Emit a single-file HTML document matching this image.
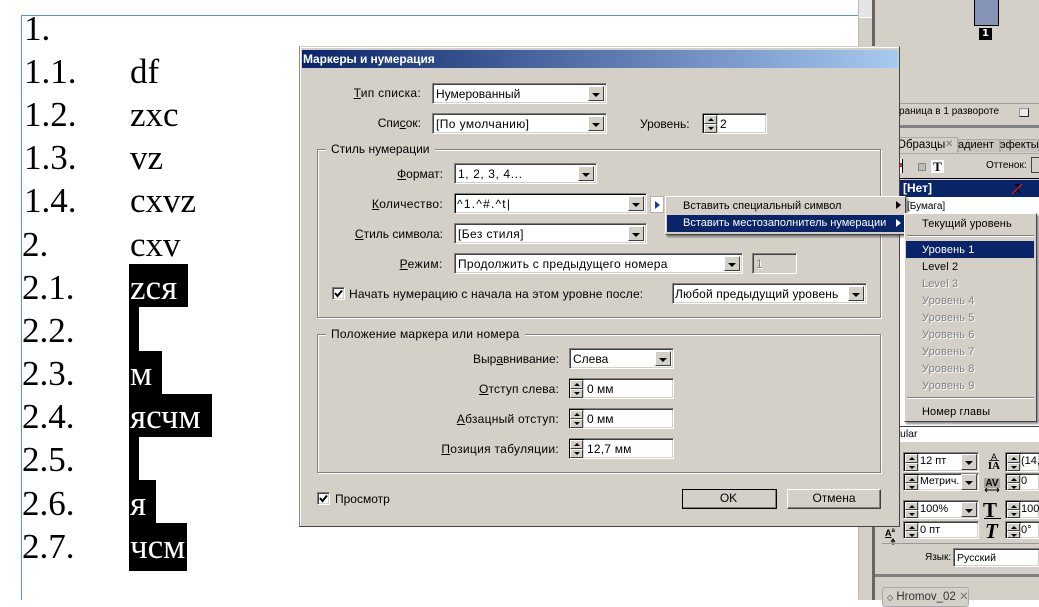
<!DOCTYPE html>
<html><head><meta charset="utf-8"><style>
html,body{margin:0;padding:0}
body{width:1039px;height:600px;position:relative;overflow:hidden;background:#fff;font:12px/14px "Liberation Sans",sans-serif;color:#000}
div,span.a{position:absolute;box-sizing:border-box}
.s{position:absolute;font:35px/40px "Liberation Serif",serif;white-space:nowrap}
.t{position:absolute;white-space:nowrap;line-height:14px}
.m{font-size:11px;letter-spacing:.1px}
.n{font-size:11px}
.r{position:absolute;white-space:nowrap;line-height:14px;text-align:right}
.k{background:#000}
.f{background:#fff;border:1px solid;border-color:#808080 #fff #fff #808080;box-shadow:inset 1px 1px 0 #404040,inset -1px -1px 0 #d4d0c8}
.f span{position:absolute;left:3px;top:3px;white-space:nowrap}
.b{position:absolute;right:2px;top:2px;bottom:2px;width:16px;background:#d4d0c8;border:1px solid;border-color:#fff #404040 #404040 #fff}
.b:after{content:"";position:absolute;left:3px;top:6px;border:4px solid transparent;border-top:4px solid #000;border-bottom:0}
.g{border:1px solid #808080;box-shadow:1px 1px 0 #fff,inset 1px 1px 0 #fff}
.gl{position:absolute;background:#d4d0c8;padding:0 5px;white-space:nowrap;line-height:14px}
.sp{position:absolute;width:15px;background:#d4d0c8;border-top:1px solid #000;border-left:1px solid #000;z-index:2}
.sp i{position:absolute;left:0;width:13px;height:50%;border:1px solid;border-color:#fff #404040 #404040 #fff;box-sizing:border-box}
.sp i:first-child{top:0}.sp i:last-child{bottom:0}
.sp i:after{content:"";position:absolute;left:3px;top:2px;border:3px solid transparent;border-bottom:3px solid #000;border-top:0}
.sp i:last-child:after{border-top:3px solid #000;border-bottom:0}
.cb{position:absolute;width:13px;height:13px;background:#fff;border:1px solid;border-color:#808080 #fff #fff #808080;box-shadow:inset 1px 1px 0 #404040,inset -1px -1px 0 #d4d0c8}
.btn{position:absolute;background:#d4d0c8;text-align:center;line-height:17px;border:1px solid;border-color:#fff #404040 #404040 #fff;box-shadow:inset -1px -1px 0 #808080}
.dis{color:#808080;text-shadow:1px 1px 0 #fff}
.tri{position:absolute;border:4px solid transparent;border-left:5px solid #000;border-right:0}
.p{background:#d4d0c8}
svg{position:absolute;overflow:visible}
</style></head><body>

<div style="left:21px;top:15px;width:838px;height:1px;background:#5b8fdc"></div>
<div style="left:21px;top:15px;width:1px;height:585px;background:#5b8fdc"></div>
<div style="left:858px;top:0;width:1px;height:600px;background:#bbb"></div>

<div class="k" style="left:129px;top:264px;width:59px;height:43px"></div>
<div class="k" style="left:129px;top:307px;width:10px;height:44px"></div>
<div class="k" style="left:129px;top:351px;width:33px;height:43px"></div>
<div class="k" style="left:129px;top:394px;width:83px;height:43px"></div>
<div class="k" style="left:129px;top:437px;width:10px;height:43px"></div>
<div class="k" style="left:129px;top:480px;width:27px;height:43px"></div>
<div class="k" style="left:129px;top:523px;width:58px;height:48px"></div>

<span class="s" style="left:24px;top:9px">1.</span>
<span class="s" style="left:24px;top:52px">1.1.</span><span class="s" style="left:130px;top:52px">df</span>
<span class="s" style="left:24px;top:95px">1.2.</span><span class="s" style="left:130px;top:95px">zxc</span>
<span class="s" style="left:24px;top:138px">1.3.</span><span class="s" style="left:130px;top:138px">vz</span>
<span class="s" style="left:24px;top:181px">1.4.</span><span class="s" style="left:130px;top:181px">cxvz</span>
<span class="s" style="left:22px;top:225px">2.</span><span class="s" style="left:130px;top:225px">cxv</span>
<span class="s" style="left:22px;top:268px">2.1.</span><span class="s" style="left:130px;top:268px;color:#fff">zcя</span>
<span class="s" style="left:22px;top:311px">2.2.</span>
<span class="s" style="left:22px;top:354px">2.3.</span><span class="s" style="left:130px;top:354px;color:#fff">м</span>
<span class="s" style="left:22px;top:397px">2.4.</span><span class="s" style="left:130px;top:397px;color:#fff">ясчм</span>
<span class="s" style="left:22px;top:440px">2.5.</span>
<span class="s" style="left:22px;top:484px">2.6.</span><span class="s" style="left:130px;top:484px;color:#fff">я</span>
<span class="s" style="left:22px;top:527px">2.7.</span><span class="s" style="left:130px;top:527px;color:#fff">чсм</span>

<!-- right side -->
<div class="p" style="left:859px;top:0;width:180px;height:600px"></div>
<div style="left:859px;top:0;width:13px;height:17px;background:#e4e4e4"></div>
<div style="left:859px;top:17px;width:13px;height:1px;background:#fff"></div>
<div style="left:872px;top:0;width:3px;height:600px;background:#666"></div>
<div style="left:974px;top:0;width:25px;height:26px;background:#8593b5;border:1px solid #000;border-top:0"></div>
<div style="left:979px;top:28px;width:13px;height:12px;background:#000;color:#fff;font:bold 10px/12px 'DejaVu Sans',sans-serif;text-align:center">1</div>
<div style="left:875px;top:103px;width:164px;height:1px;background:#a0a0a0"></div>
<span class="t" style="left:899px;top:105px;font-size:10px">раница в 1 развороте</span>
<div style="left:1019px;top:108px;width:10px;height:9px;background:#e8e8e8;border:1px solid #999;border-right-color:#222;border-bottom-color:#222"></div>
<div style="left:875px;top:125px;width:164px;height:3px;background:#808080"></div>
<div style="left:899px;top:137px;width:59px;height:16px;background:#d4d0c8;border:1px solid #aaa;border-bottom:0"></div>
<span class="t" style="left:897px;top:138px;font-size:11.5px">Образцы</span><span class="t" style="left:945px;top:138px;color:#777;font-size:10px">✕</span>
<div style="left:958px;top:139px;width:42px;height:13px;background:#c8c4bc;border:1px solid #aaa;border-bottom:0"></div>
<span class="t" style="left:958px;top:138px;font-size:11px">адиент</span>
<div style="left:1000px;top:139px;width:39px;height:13px;background:#c8c4bc;border:1px solid #aaa;border-bottom:0"></div>
<span class="t" style="left:1000px;top:138px;font-size:11px">эфекты</span>
<div style="left:875px;top:153px;width:164px;height:1px;background:#aaa"></div>
<div style="left:899px;top:159px;width:4px;height:14px;background:#fff;border-right:1px solid #000"></div>
<div style="left:899px;top:163px;width:3px;height:4px;background:#d22"></div>
<div style="left:918px;top:163px;width:8px;height:8px;background:#bbb;border:1px solid #888"></div>
<div style="left:931px;top:160px;width:13px;height:13px;background:#fff;font:bold 13px/14px 'Liberation Serif',serif;text-align:center">T</div>
<span class="t" style="left:986px;top:159px;font-size:10px">Оттенок:</span>
<div style="left:1031px;top:157px;width:8px;height:16px;border:1px solid #444;border-right:0"></div>
<div style="left:875px;top:178px;width:164px;height:1px;background:#000"></div>
<div style="left:899px;top:180px;width:140px;height:17px;background:#0a246a"></div>
<span class="t" style="left:903px;top:181px;color:#fff;font-weight:bold">[Нет]</span>
<svg style="left:1012px;top:184px" width="10" height="10" viewBox="0 0 10 10"><path d="M3 1 L7 1 L5 5 L8 9 M5 5 L2 9" stroke="#000" stroke-width="1.6" fill="none"/><path d="M0 10 L10 0" stroke="#e22" stroke-width="1.2"/></svg>
<div style="left:899px;top:197px;width:140px;height:229px;background:#fff"></div>
<span class="t" style="left:907px;top:200px;font-size:10px">[Бумага]</span>
<div style="left:875px;top:426px;width:164px;height:16px;background:#fff;border-top:1px solid #444"></div>
<span class="t" style="left:900px;top:427px;font-size:10.5px">ular</span>

<div class="f" style="left:903px;top:452px;width:76px;height:20px"></div>
<div class="sp" style="left:904px;top:453px;height:18px"><i></i><i></i></div>
<span class="t n" style="left:920px;top:454px">12 пт</span>
<div class="b" style="left:961px;top:454px;right:auto;width:16px;height:16px"></div>
<div class="f" style="left:903px;top:473px;width:76px;height:18px"></div>
<div class="sp" style="left:904px;top:474px;height:16px"><i></i><i></i></div>
<span class="t n" style="left:920px;top:474px;font-size:10.5px">Метрич.</span>
<div class="b" style="left:961px;top:474px;right:auto;width:16px;height:16px"></div>
<div class="f" style="left:1005px;top:452px;width:34px;height:20px;border-right:0"></div>
<div class="sp" style="left:1006px;top:453px;height:18px"><i></i><i></i></div>
<span class="t n" style="left:1021px;top:454px">(14,4</span>
<div class="f" style="left:1005px;top:473px;width:34px;height:18px;border-right:0"></div>
<div class="sp" style="left:1006px;top:474px;height:16px"><i></i><i></i></div>
<span class="t n" style="left:1021px;top:474px">0</span>
<svg style="left:987px;top:452px" width="14" height="19" viewBox="0 0 14 19"><text x="7" y="8" font-family="Liberation Sans" font-size="9" text-anchor="middle">A</text><text x="7" y="17" font-family="Liberation Serif" font-weight="bold" font-size="11" text-anchor="middle">IA</text><path d="M2 8.500 H12" stroke="#000" stroke-width=".8"/></svg>
<div style="left:984px;top:478px;width:16px;height:10px;background:#a8a4a0;font:bold 10px/11px 'Liberation Sans',sans-serif;text-align:center">AV</div>
<svg style="left:985px;top:488px" width="14" height="4" viewBox="0 0 14 4"><path d="M0 2 H14 M0 2 L2 0 M0 2 L2 4 M14 2 L12 0 M14 2 L12 4" stroke="#000" fill="none"/></svg>
<div class="f" style="left:903px;top:500px;width:76px;height:19px"></div>
<div class="sp" style="left:904px;top:501px;height:17px"><i></i><i></i></div>
<span class="t n" style="left:920px;top:502px">100%</span>
<div class="b" style="left:961px;top:502px;right:auto;width:16px;height:15px"></div>
<div class="f" style="left:903px;top:521px;width:76px;height:18px"></div>
<div class="sp" style="left:904px;top:522px;height:16px"><i></i><i></i></div>
<span class="t n" style="left:920px;top:523px">0 пт</span>
<span class="s" style="left:983px;top:498px;font:bold 21px/24px 'Liberation Serif',serif">T</span>
<div style="left:984px;top:518px;width:17px;height:1px;background:#000"></div>
<span class="s" style="left:985px;top:519px;font:italic bold 21px/24px 'Liberation Serif',serif">T</span>
<div class="f" style="left:1005px;top:500px;width:34px;height:19px;border-right:0"></div>
<div class="sp" style="left:1006px;top:501px;height:17px"><i></i><i></i></div>
<span class="t n" style="left:1021px;top:502px">100%</span>
<div class="f" style="left:1005px;top:521px;width:34px;height:18px;border-right:0"></div>
<div class="sp" style="left:1006px;top:522px;height:16px"><i></i><i></i></div>
<span class="t n" style="left:1021px;top:523px">0°</span>
<span class="t" style="left:885px;top:527px;font:bold 9px/12px 'Liberation Sans',sans-serif"><u>A</u><sup style="font-size:6px;line-height:0">a</sup></span>
<svg style="left:890px;top:539px" width="6" height="6" viewBox="0 0 6 6"><path d="M3 6 V1 M1 3 L3 0 L5 3" stroke="#000" fill="none"/></svg>
<div style="left:882px;top:543px;width:157px;height:1px;background:#999"></div>
<span class="t" style="left:925px;top:551px;font-size:10px">Язык:</span>
<div class="f" style="left:953px;top:548px;width:86px;height:19px;border-right:0"><span style="top:2px;font-size:10.5px">Русский</span></div>
<div style="left:875px;top:574px;width:164px;height:3px;background:#808080"></div>
<div style="left:882px;top:587px;width:87px;height:20px;border:1px solid #aaa;border-radius:3px;background:#d4d0c8"></div>
<span class="t" style="left:887px;top:590px;color:#333;font-size:11.5px"><span style="font-size:8px">◇</span> Hromov_02 <span style="color:#777">✕</span></span>

<!-- dialog -->
<div style="left:299px;top:46px;width:601px;height:481px;background:#d4d0c8;border:1px solid;border-color:#d4d0c8 #444 #444 #888;box-shadow:inset 1px 1px 0 #fff"></div>
<div style="left:302px;top:50px;width:596px;height:18px;background:linear-gradient(90deg,#0a246a,#a6caf0)"></div>
<span class="t" style="left:303px;top:52px;color:#fff;font-weight:bold;font-size:12px;letter-spacing:-.1px">Маркеры и нумерация</span>

<div class="r" style="right:618px;top:86px;letter-spacing:.3px"><u>Т</u>ип списка:</div>
<div class="f" style="left:432px;top:83px;width:175px;height:21px"><span>Нумерованный</span><div class="b"></div></div>
<div class="r" style="right:618px;top:116px">Спи<u>с</u>ок:</div>
<div class="f" style="left:432px;top:113px;width:175px;height:21px"><span style="letter-spacing:.4px">[По умолчанию]</span><div class="b"></div></div>
<span class="t" style="left:640px;top:117px">Уровень:</span>
<div class="f" style="left:702px;top:113px;width:65px;height:21px"><span style="left:17px">2</span></div>
<div class="sp" style="left:703px;top:114px;height:19px"><i></i><i></i></div>

<div class="g" style="left:317px;top:149px;width:564px;height:169px"></div>
<span class="gl" style="left:326px;top:142px">Стиль нумерации</span>
<div class="r" style="right:596px;top:167px"><u>Ф</u>ормат:</div>
<div class="f" style="left:454px;top:163px;width:143px;height:21px"><span style="letter-spacing:.6px">1, 2, 3, 4...</span><div class="b"></div></div>
<div class="r" style="right:596px;top:197px;letter-spacing:.3px"><u>К</u>оличество:</div>
<div class="f" style="left:454px;top:193px;width:193px;height:21px;box-shadow:inset 1px 1px 0 #000,inset -1px -1px 0 #d4d0c8"><span style="left:2px;letter-spacing:1.2px">^1.^#.^t|</span><div class="b"></div></div>
<div class="r" style="right:596px;top:227px"><u>С</u>тиль символа:</div>
<div class="f" style="left:454px;top:223px;width:193px;height:21px"><span style="letter-spacing:.4px">[Без стиля]</span><div class="b"></div></div>
<div class="r" style="right:596px;top:257px;letter-spacing:.5px"><u>Р</u>ежим:</div>
<div class="f" style="left:454px;top:253px;width:289px;height:21px"><span style="letter-spacing:.26px">Продолжить с предыдущего номера</span><div class="b"></div></div>
<div class="f" style="left:752px;top:253px;width:45px;height:21px;background:#d4d0c8"><span class="dis">1</span></div>
<div class="cb" style="left:332px;top:287px"></div>
<svg style="left:334px;top:289px" width="9" height="9" viewBox="0 0 9 9"><path d="M1 4 L3.500 7 L8 1.500" stroke="#000" stroke-width="2" fill="none"/></svg>
<span class="t" style="left:349px;top:287px;letter-spacing:.17px">Начать нумерацию с начала на этом уровне после:</span>
<div class="f" style="left:672px;top:283px;width:195px;height:21px"><span style="left:2px;letter-spacing:.13px">Любой предыдущий уровень</span><div class="b"></div></div>

<div class="g" style="left:317px;top:334px;width:564px;height:139px"></div>
<span class="gl" style="left:326px;top:327px;letter-spacing:.22px">Положение маркера или номера</span>
<div class="r" style="right:480px;top:352px">Выр<u>а</u>внивание:</div>
<div class="f" style="left:569px;top:348px;width:105px;height:21px"><span>Слева</span><div class="b"></div></div>
<div class="r" style="right:480px;top:382px;letter-spacing:.15px"><u>О</u>тступ слева:</div>
<div class="f" style="left:569px;top:378px;width:105px;height:21px"><span style="left:17px">0 мм</span></div>
<div class="sp" style="left:569px;top:379px;height:19px"><i></i><i></i></div>
<div class="r" style="right:480px;top:412px;letter-spacing:.25px"><u>А</u>бзацный отступ:</div>
<div class="f" style="left:569px;top:408px;width:105px;height:21px"><span style="left:17px">0 мм</span></div>
<div class="sp" style="left:569px;top:409px;height:19px"><i></i><i></i></div>
<div class="r" style="right:480px;top:442px;letter-spacing:.3px"><u>П</u>озиция табуляции:</div>
<div class="f" style="left:569px;top:438px;width:105px;height:21px"><span style="left:17px;letter-spacing:.2px">12,7 мм</span></div>
<div class="sp" style="left:569px;top:439px;height:19px"><i></i><i></i></div>

<div class="cb" style="left:317px;top:492px"></div>
<svg style="left:319px;top:494px" width="9" height="9" viewBox="0 0 9 9"><path d="M1 4 L3.500 7 L8 1.500" stroke="#000" stroke-width="2" fill="none"/></svg>
<span class="t" style="left:335px;top:492px">Просмотр</span>
<div class="btn" style="left:682px;top:489px;width:95px;height:20px;outline:1px solid #000;outline-offset:-1px;padding-right:2px">OK</div>
<div class="btn" style="left:787px;top:489px;width:94px;height:20px">Отмена</div>

<!-- flyout button -->
<div style="left:650px;top:196px;width:14px;height:17px;background:#fff;border:1px solid #b8b4ac"></div>
<div class="tri" style="left:655px;top:201px;border-left-color:#1a3a9a"></div>

<!-- menu 1 -->
<div style="left:665px;top:196px;width:241px;height:39px;background:#d4d0c8;border:1px solid;border-color:#fff #444 #444 #fff;box-shadow:2px 2px 2px rgba(0,0,0,.45)"></div>
<div style="left:667px;top:215px;width:238px;height:17px;background:#0a246a"></div>
<span class="t m" style="left:683px;top:199px;letter-spacing:0">Вставить специальный символ</span>
<div class="tri" style="left:896px;top:201px"></div>
<span class="t m" style="left:683px;top:216px;color:#fff;letter-spacing:0">Вставить местозаполнитель нумерации</span>
<div class="tri" style="left:896px;top:219px;border-left-color:#fff"></div>

<!-- menu 2 -->
<div style="left:904px;top:213px;width:133px;height:209px;background:#d4d0c8;border:1px solid;border-color:#fff #444 #444 #fff;box-shadow:2px 2px 2px rgba(0,0,0,.45)"></div>
<span class="t m" style="left:922px;top:217px">Текущий уровень</span>
<div style="left:907px;top:235px;width:127px;height:2px;border-top:1px solid #808080;border-bottom:1px solid #fff"></div>
<div style="left:906px;top:241px;width:128px;height:17px;background:#0a246a"></div>
<span class="t m" style="left:922px;top:243px;color:#fff">Уровень 1</span>
<span class="t m" style="left:922px;top:260px">Level 2</span>
<span class="t m dis" style="left:922px;top:277px">Level 3</span>
<span class="t m dis" style="left:922px;top:294px">Уровень 4</span>
<span class="t m dis" style="left:922px;top:311px">Уровень 5</span>
<span class="t m dis" style="left:922px;top:328px">Уровень 6</span>
<span class="t m dis" style="left:922px;top:345px">Уровень 7</span>
<span class="t m dis" style="left:922px;top:362px">Уровень 8</span>
<span class="t m dis" style="left:922px;top:379px">Уровень 9</span>
<div style="left:907px;top:397px;width:127px;height:2px;border-top:1px solid #808080;border-bottom:1px solid #fff"></div>
<span class="t m" style="left:922px;top:405px">Номер главы</span>

</body></html>
